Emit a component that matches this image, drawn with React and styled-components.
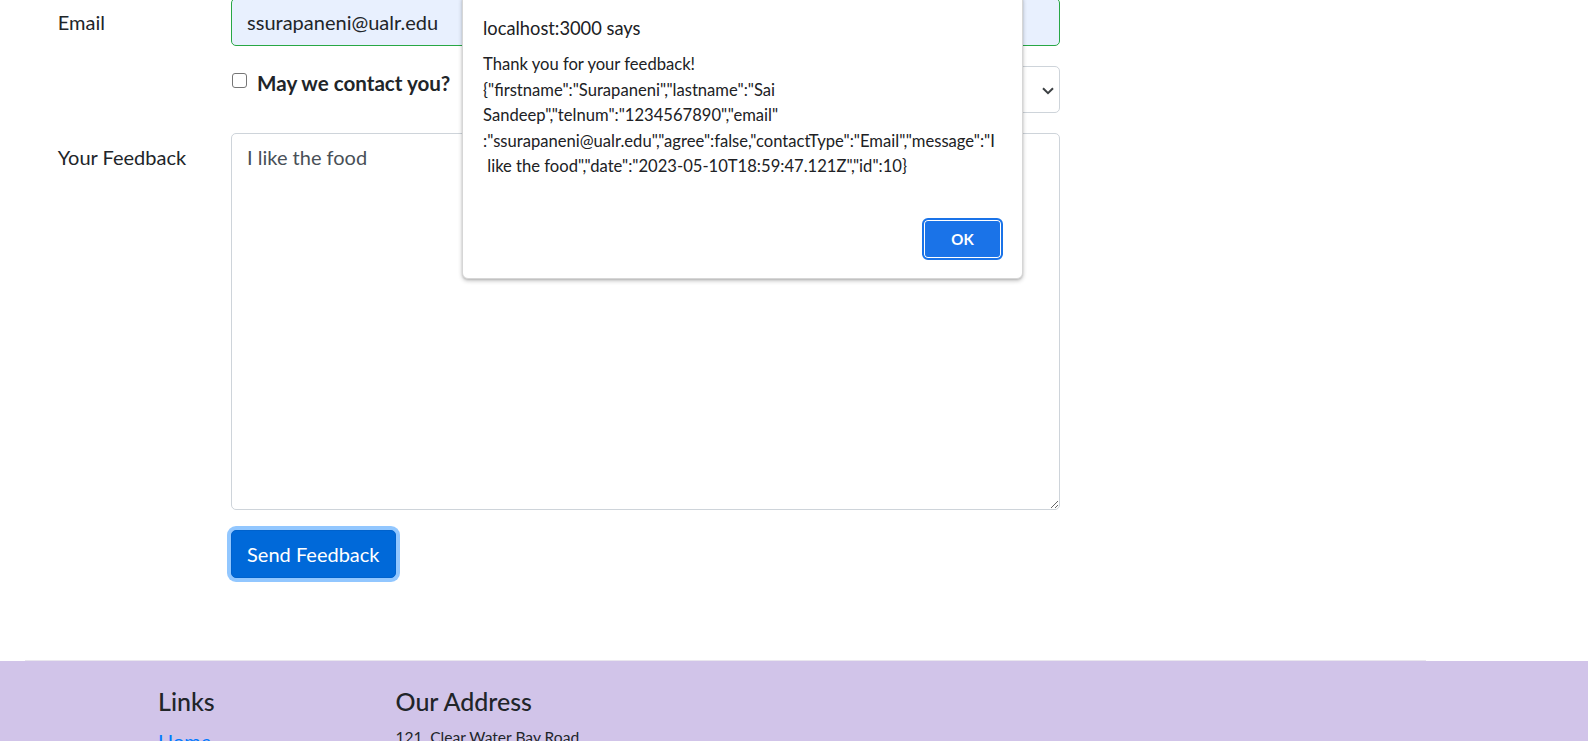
import React from "react";
import styled, { createGlobalStyle } from "styled-components";

const Global = createGlobalStyle`
  html, body { margin: 0; padding: 0; background: #fff; }
  body {
    font-family: Lato, "Noto Sans", sans-serif;
    font-size: 20px;
    line-height: 1.5;
    color: #212529;
    overflow: hidden;
  }
  * { box-sizing: border-box; }
`;

const Page = styled.div`
  position: relative;
  width: 1588px;
`;

const Main = styled.main`
  margin-top: -2px;
  padding-left: 39px;
`;

const FormGrid = styled.form`
  width: 1040px;
  margin: 0;
`;

const Row = styled.div`
  display: grid;
  grid-template-columns: repeat(12, 1fr);
  margin-bottom: 20px;
`;

const Col = styled.div`
  grid-column: ${(p) => p.$start} / span ${(p) => p.$span};
  padding: 0 18.75px;
  position: relative;
`;

const Label = styled.label`
  display: block;
  padding: 8.75px 0;
  font-size: 20px;
  line-height: 30px;
`;

const Input = styled.input`
  display: block;
  width: 100%;
  height: 47.5px;
  padding: 7.5px 15px;
  font-family: inherit;
  font-size: 20px;
  line-height: 30px;
  color: #212529;
  background: ${(p) => (p.$autofill ? "#e8f0fe" : "#fff")};
  border: 1px solid ${(p) => (p.$valid ? "#28a745" : "#ced4da")};
  border-radius: 5px;
  outline: none;
`;

const Select = styled.select`
  display: block;
  width: 100%;
  height: 47.5px;
  padding: 7.5px 15px;
  font-family: inherit;
  font-size: 20px;
  line-height: 30px;
  color: #495057;
  background: #fff;
  border: 1px solid #ced4da;
  border-radius: 5px;
  appearance: none;
  outline: none;
`;

const Chevron = styled.svg`
  position: absolute;
  right: 25px;
  top: 21px;
  pointer-events: none;
`;

const Check = styled.label`
  display: flex;
  align-items: flex-start;
  margin-top: 2px;
  font-size: 20px;
  line-height: 30px;
`;

const CheckBox = styled.input`
  appearance: none;
  flex: none;
  width: 15px;
  height: 15px;
  margin: 5px 10px 0 1px;
  border: 1px solid #767676;
  border-radius: 3px;
  background: #fff;
`;

const Strong = styled.strong`
  font-weight: 700;
  font-size: 20.6px;
`;

const TextArea = styled.textarea`
  display: block;
  width: 100%;
  height: 377px;
  padding: 7.5px 15px;
  font-family: inherit;
  font-size: 20px;
  line-height: 30px;
  color: #495057;
  background: #fff;
  border: 1px solid #ced4da;
  border-radius: 5px;
  outline: none;
`;

const Button = styled.button`
  display: inline-block;
  height: 47.5px;
  padding: 7.5px 15px;
  font-family: inherit;
  font-size: 20px;
  line-height: 30px;
  color: #fff;
  background: #0069d9;
  border: 1px solid #0062cc;
  border-radius: 5px;
  box-shadow: 0 0 0 4px rgba(38, 143, 255, 0.5);
`;

const Divider = styled.div`
  height: 1px;
  width: 1401px;
  margin: 82px 0 0 25px;
  background: #e9e6ee;
`;

const Footer = styled.footer`
  background: #d1c4e9;
  padding: 25px 0 40px 139.25px;
`;

const FooterRow = styled.div`
  display: grid;
  grid-template-columns: 237.5px 593.75px 475px;
`;

const FooterCol = styled.div`
  padding: 0 18.75px;
`;

const H5 = styled.h5`
  margin: 0 0 10px;
  font-size: 25px;
  font-weight: 500;
  line-height: 30px;
  color: #212529;
`;

const LinkList = styled.ul`
  list-style: none;
  margin: 0;
  padding: 0;
  font-size: 20px;
  line-height: 30px;
`;

const FooterLink = styled.a`
  color: #007bff;
  text-decoration: none;
`;

const Address = styled.address`
  font-style: normal;
  font-size: 15.6px;
  line-height: 23.4px;
  margin: 0;
`;

/* Browser alert dialog */
const Dialog = styled.div`
  position: absolute;
  top: -1px;
  left: 462px;
  width: 561px;
  height: 282px;
  padding: 18px 19px 18px 20px;
  background: #fff;
  border: 1px solid #d6d6d6;
  border-radius: 0 0 6px 6px;
  box-shadow: 0 2px 4px rgba(0, 0, 0, 0.22), 0 1px 2px rgba(0, 0, 0, 0.12);
  display: flex;
  flex-direction: column;
  color: #202124;
`;

const DialogTitle = styled.div`
  font-size: 18.3px;
  line-height: 25px;
  margin-bottom: 11px;
`;

const DialogBody = styled.div`
  font-size: 16.6px;
  line-height: 25.5px;
`;

const DialogLine = styled.div`
  white-space: pre;
`;

const DialogActions = styled.div`
  margin-top: auto;
  display: flex;
  justify-content: flex-end;
`;

const OkButton = styled.button`
  width: 81px;
  height: 42px;
  border-radius: 6px;
  border: 2px solid #1a73e8;
  background: #1a73e8;
  box-shadow: inset 0 0 0 1px #fff;
  color: #fff;
  font-family: inherit;
  font-size: 15px;
  font-weight: 700;
  padding: 0;
`;

const lines = [
  '{"firstname":"Surapaneni","lastname":"Sai',
  'Sandeep","telnum":"1234567890","email"',
  ':"ssurapaneni@ualr.edu","agree":false,"contactType":"Email","message":"I',
  ' like the food","date":"2023-05-10T18:59:47.121Z","id":10}',
];

export default function App() {
  return (
    <Page>
      <Global />
      <Main>
        <FormGrid onSubmit={(e) => e.preventDefault()}>
          <Row>
            <Col $start={1} $span={2}>
              <Label htmlFor="email">Email</Label>
            </Col>
            <Col $start={3} $span={10}>
              <Input id="email" type="email" $valid $autofill defaultValue="ssurapaneni@ualr.edu" />
            </Col>
          </Row>
          <Row>
            <Col $start={3} $span={6}>
              <Check>
                <CheckBox type="checkbox" />
                <Strong>May we contact you?</Strong>
              </Check>
            </Col>
            <Col $start={10} $span={3}>
              <Select defaultValue="Email">
                <option>Tel.</option>
                <option>Email</option>
              </Select>
              <Chevron width="12" height="8" viewBox="0 0 12 8">
                <path d="M1 1.2 6 6.2 11 1.2" fill="none" stroke="#3c4043" strokeWidth="2" />
              </Chevron>
            </Col>
          </Row>
          <Row>
            <Col $start={1} $span={2}>
              <Label htmlFor="message">Your Feedback</Label>
            </Col>
            <Col $start={3} $span={10}>
              <TextArea id="message" rows={12} defaultValue="I like the food" />
            </Col>
          </Row>
          <Row>
            <Col $start={3} $span={10}>
              <Button type="submit">Send Feedback</Button>
            </Col>
          </Row>
        </FormGrid>
      </Main>
      <Divider />
      <Footer>
        <FooterRow>
          <FooterCol>
            <H5>Links</H5>
            <LinkList>
              <li><FooterLink href="#">Home</FooterLink></li>
              <li><FooterLink href="#">About</FooterLink></li>
              <li><FooterLink href="#">Menu</FooterLink></li>
              <li><FooterLink href="#">Contact</FooterLink></li>
            </LinkList>
          </FooterCol>
          <FooterCol>
            <H5>Our Address</H5>
            <Address>
              121, Clear Water Bay Road<br />
              Clear Water Bay, Kowloon<br />
              HONG KONG
            </Address>
          </FooterCol>
        </FooterRow>
      </Footer>
      <Dialog role="alertdialog">
        <DialogTitle>localhost:3000 says</DialogTitle>
        <DialogBody>
          <DialogLine>Thank you for your feedback!</DialogLine>
          {lines.map((l, i) => (
            <DialogLine key={i}>{l}</DialogLine>
          ))}
        </DialogBody>
        <DialogActions>
          <OkButton type="button">OK</OkButton>
        </DialogActions>
      </Dialog>
    </Page>
  );
}
